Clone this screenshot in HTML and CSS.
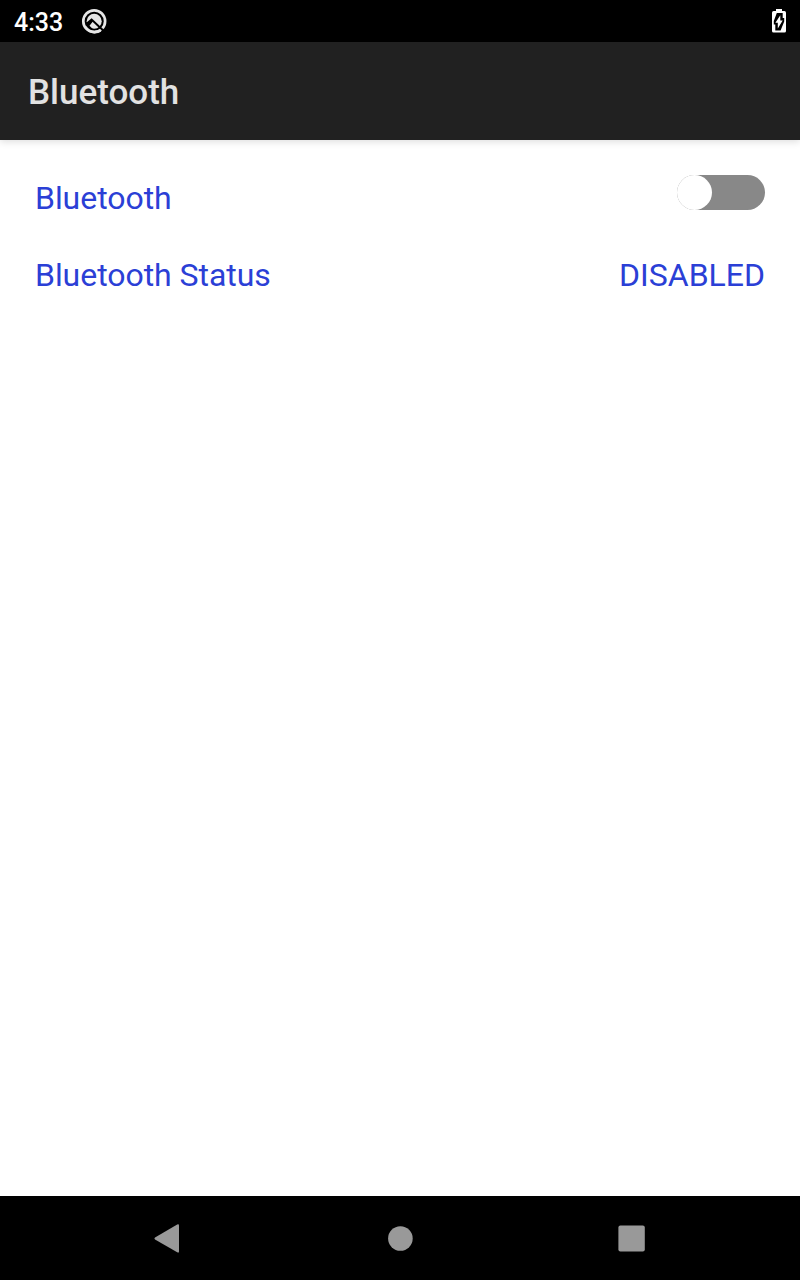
FILE: index.html
```html
<!DOCTYPE html>
<html lang="en">
<head>
<meta charset="utf-8">
<title>Bluetooth</title>
<link rel="stylesheet" href="styles.css">
</head>
<body>
<div class="screen">
  <div class="status-bar">
    <span class="clock">4:33</span>
    <svg class="q-icon" width="28" height="28" viewBox="0 0 28 28">
      <circle cx="14.2" cy="14.2" r="10.9" fill="none" stroke="#e6e6e6" stroke-width="2.7"/>
      <circle cx="14.2" cy="14.2" r="7.5" fill="#e6e6e6"/>
      <path d="M6.5 16.8L11.6 12.6L23.5 23.8" fill="none" stroke="#000" stroke-width="2"/>
      <path d="M6 17.2L11.6 13L13 14.3L9.5 18.8L13.5 22.8H9L6 20Z" fill="#000"/>
      <path d="M5 19.5Q9 25.1 14.5 25.1Q18 25.1 20.5 23.4" fill="none" stroke="#e6e6e6" stroke-width="2.6"/>
    </svg>
    <svg class="battery" width="14" height="24" viewBox="0 0 14 24">
      <path d="M4 0H10V2H12.4Q14 2 14 3.8V22Q14 23.6 12.4 23.6H1.6Q0 23.6 0 22V3.8Q0 2 1.6 2H4Z" fill="#fff"/>
      <path d="M4.8 4H10.7V9H12.2V12.6L8.6 21.4H3.3V15.6H1.8V12Z" fill="#000"/>
      <path d="M8.3 6.2V11.6H10.7L5.8 19.4V13.8H3.4Z" fill="#fff"/>
    </svg>
  </div>
  <header class="app-bar"><h1 class="title">Bluetooth</h1></header>
  <main class="content">
    <div class="row">
      <span class="label">Bluetooth</span>
      <span class="switch"><span class="thumb"></span></span>
    </div>
    <div class="row">
      <span class="label">Bluetooth Status</span>
      <span>DISABLED</span>
    </div>
  </main>
  <nav class="nav-bar">
    <svg width="800" height="84" viewBox="0 0 800 84" fill="#999">
      <path d="M155 41.5L177.2 28.6Q179 27.8 179 29.6V55.4Q179 57.2 177.2 56.3L155 43.5Q153.8 42.5 155 41.5Z"/>
      <circle cx="400.4" cy="42.5" r="12.3"/>
      <rect x="618.4" y="29.4" width="26.4" height="26.2" rx="2"/>
    </svg>
  </nav>
</div>
</body>
</html>
```
FILE: styles.css
```css
body {
  margin: 0;
  background: #fff;
  font-family: Roboto, sans-serif;
}
.screen {
  display: flex;
  flex-direction: column;
  height: 1280px;
}
.status-bar {
  display: flex;
  box-sizing: border-box;
  height: 42px;
  padding: 0 14px;
  background: #000;
}
.clock {
  width: 66px;
  padding-top: 3px;
  color: #fff;
  font-size: 25px;
  font-weight: 500;
  line-height: 39px;
}
.q-icon {
  margin-top: 7px;
}
.battery {
  margin-top: 9px;
  margin-left: auto;
}
.app-bar {
  display: flex;
  align-items: center;
  height: 98px;
  padding-left: 28px;
  background: #212121;
  box-shadow: 0 2px 7px rgba(0, 0, 0, 0.13);
}
.title {
  margin: 0;
  padding-top: 4px;
  color: #e2e2e2;
  font-size: 35px;
  font-weight: 500;
  line-height: 42px;
}
.content {
  flex: 1;
  padding: 35px 35px 0;
}
.row {
  display: flex;
  justify-content: space-between;
  height: 77px;
  color: #2b3fd6;
  font-size: 32px;
  line-height: 46px;
}
.label {
  letter-spacing: -0.05px;
}
.switch {
  box-sizing: border-box;
  width: 88px;
  height: 35px;
  border-radius: 18px;
  background: #888;
}
.thumb {
  display: block;
  width: 35px;
  height: 35px;
  border-radius: 50%;
  background: #fff;
}
.nav-bar {
  height: 84px;
  background: #000;
}
.nav-bar svg {
  display: block;
}
```
